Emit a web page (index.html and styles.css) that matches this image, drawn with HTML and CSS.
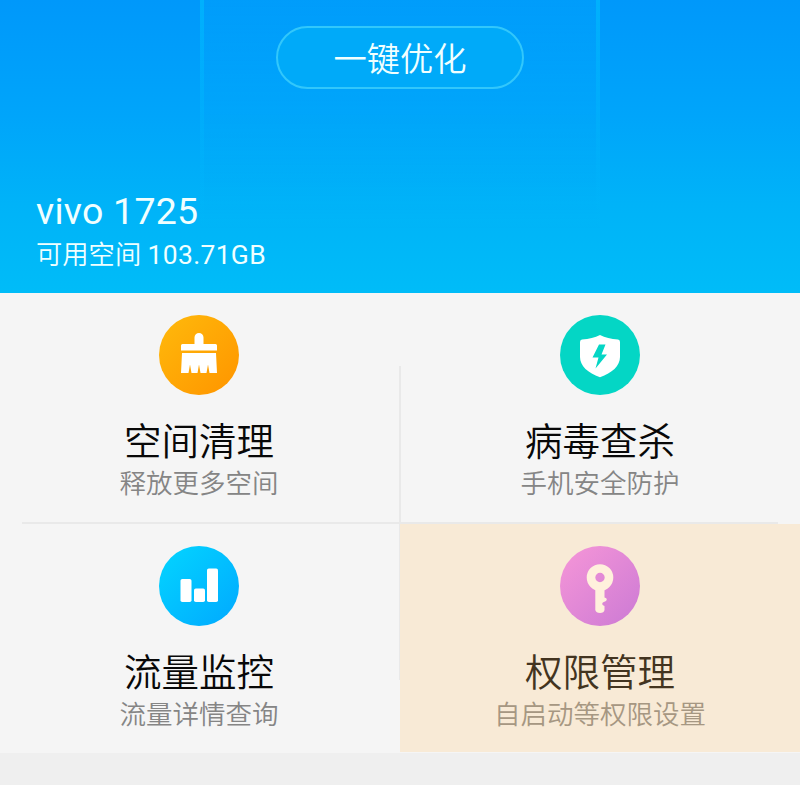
FILE: index.html
```html
<!DOCTYPE html>
<html lang="zh-CN">
<head>
<meta charset="utf-8">
<title>vivo 1725</title>
<link rel="stylesheet" href="styles.css">
</head>
<body>
<header class="hero">
  <div class="panel"><button class="optimize">一键优化</button></div>
  <div class="device">
    <h1 class="model">vivo 1725</h1>
    <p class="storage">可用空间 <span class="amount">103.71GB</span></p>
  </div>
</header>
<main class="grid">
  <section class="tile">
    <svg class="icon" viewBox="0 0 80 80">
      <defs><linearGradient id="orange" x1="0" y1="0" x2="1" y2="1"><stop offset=".1" stop-color="#ffb60a"/><stop offset=".9" stop-color="#ff9800"/></linearGradient></defs>
      <circle cx="40" cy="40" r="40" fill="url(#orange)"/>
      <path fill="#fff" d="M22 35.500v-5q0-1.500 1.500-1.500H35.500V22.500a4.500 4.500 0 0 1 9 0v6.500H56.500q1.500 0 1.500 1.500v5zM23 38H57L58 58H50.500L49 49.500 47.500 58H41.500L40 49.500 38.500 58H32.500L31 49.500 29.500 58H22z"/>
    </svg>
    <h2 class="title">空间清理</h2>
    <p class="note">释放更多空间</p>
  </section>
  <section class="tile">
    <svg class="icon" viewBox="0 0 80 80">
      <circle cx="40" cy="40" r="40" fill="#04d6c5"/>
      <path fill="#fff" d="M40 20C45 22.500 51 24 58 24.500Q60 24.800 60 27V42C60 51 52 58 40 62.300C28 58 20 51 20 42V27Q20 24.800 22 24.500C29 24 35 22.500 40 20z"/>
      <path fill="#04d6c5" d="M39 29.500H45.500L41.500 39.500H47L35.500 53.500L38.500 42.500H32.500z"/>
    </svg>
    <h2 class="title">病毒查杀</h2>
    <p class="note">手机安全防护</p>
  </section>
  <section class="tile">
    <svg class="icon" viewBox="0 0 80 80">
      <defs><linearGradient id="blue" x1="0" y1="0" x2="1" y2="1"><stop offset=".1" stop-color="#03d1ff"/><stop offset=".9" stop-color="#01adff"/></linearGradient></defs>
      <circle cx="40" cy="40" r="40" fill="url(#blue)"/>
      <g fill="#fff"><rect x="21.500" y="33" width="11" height="23" rx="1.800"/><rect x="35" y="42.500" width="11" height="13.500" rx="1.800"/><rect x="48" y="22.500" width="11" height="33.500" rx="1.800"/></g>
    </svg>
    <h2 class="title">流量监控</h2>
    <p class="note">流量详情查询</p>
  </section>
  <section class="tile selected">
    <svg class="icon" viewBox="0 0 80 80">
      <defs><linearGradient id="pink" x1="0" y1="0" x2="1" y2="1"><stop offset=".15" stop-color="#f092d7"/><stop offset=".85" stop-color="#d27ed5"/></linearGradient></defs>
      <circle cx="40" cy="40" r="40" fill="url(#pink)"/>
      <circle cx="40" cy="31.500" r="9" fill="none" stroke="#fff0dc" stroke-width="8.600"/>
      <path fill="#fff0dc" d="M35.300 41H44.500V51.500L46.300 52.200Q47.500 53.700 46 55L42.800 56.500Q41.300 58 43 59.300L44.500 60V64Q44 67 40 67T35.300 64z"/>
    </svg>
    <h2 class="title">权限管理</h2>
    <p class="note">自启动等权限设置</p>
  </section>
</main>
</body>
</html>
```
FILE: styles.css
```css
* { box-sizing: border-box; }

body {
  margin: 0;
  background: #efefef;
  font-family: Roboto, "Noto Sans CJK SC DemiLight", "Noto Sans CJK SC", sans-serif;
  font-weight: 350;
}

h1, h2, p { margin: 0; font-weight: 350; }

.hero {
  height: 293px;
  background: linear-gradient(#0098fa, #00a5fa 40%, #00b3f8 70%, #00bcf8);
}

.panel {
  width: 400px;
  height: 230px;
  margin: 0 auto -41px;
  padding-top: 26px;
  border: solid;
  border-width: 0 4px;
  border-image: linear-gradient(rgba(0, 190, 255, .6), rgba(0, 190, 255, 0)) 1;
  background: linear-gradient(rgba(0, 174, 255, .2), rgba(0, 174, 255, 0));
}

.optimize {
  display: block;
  width: 248px;
  height: 63px;
  margin: 0 auto;
  padding: 4px 0 0;
  border: 2px solid #32c7fb;
  border-radius: 32px;
  background: #00aaf9;
  color: #f0ffff;
  font: 350 33.300px/55px Roboto, "Noto Sans CJK SC DemiLight", "Noto Sans CJK SC", sans-serif;
}

.device {
  padding-left: 36px;
  color: #f0ffff;
}

.model {
  padding-top: 1px;
  font-size: 37.500px;
  line-height: 43px;
  letter-spacing: .25px;
  font-weight: 375;
}

.storage {
  font-size: 26.300px;
  line-height: 44px;
}

.amount {
  font-size: 26.400px;
  font-weight: 375;
  letter-spacing: .35px;
}

.grid {
  position: relative;
  display: grid;
  grid-template-columns: 400px 400px;
  grid-template-rows: 231px 229px;
  background: #f5f5f5;
}

.grid::before, .grid::after {
  content: "";
  position: absolute;
  background: #e9e9e9;
}

.grid::before {
  left: 22px;
  right: 22px;
  top: 229px;
  height: 2px;
}

.grid::after {
  left: 399px;
  top: 73px;
  width: 2px;
  height: 314px;
}

.tile {
  padding: 22px 2px 0 0;
  text-align: center;
}

.tile:nth-child(2n) { padding: 22px 0 0; }

.selected {
  z-index: 1;
  height: 228px;
  background: #f8ead6;
}

.icon {
  display: block;
  width: 80px;
  height: 80px;
  margin: 0 auto;
}

.title {
  margin-top: 23px;
  font-size: 37.500px;
  line-height: 48px;
  color: #080808;
}

.note {
  font-size: 26.500px;
  line-height: 36px;
  color: #858585;
}

.selected .title { color: #433420; }
.selected .note { color: #a69782; }
```
